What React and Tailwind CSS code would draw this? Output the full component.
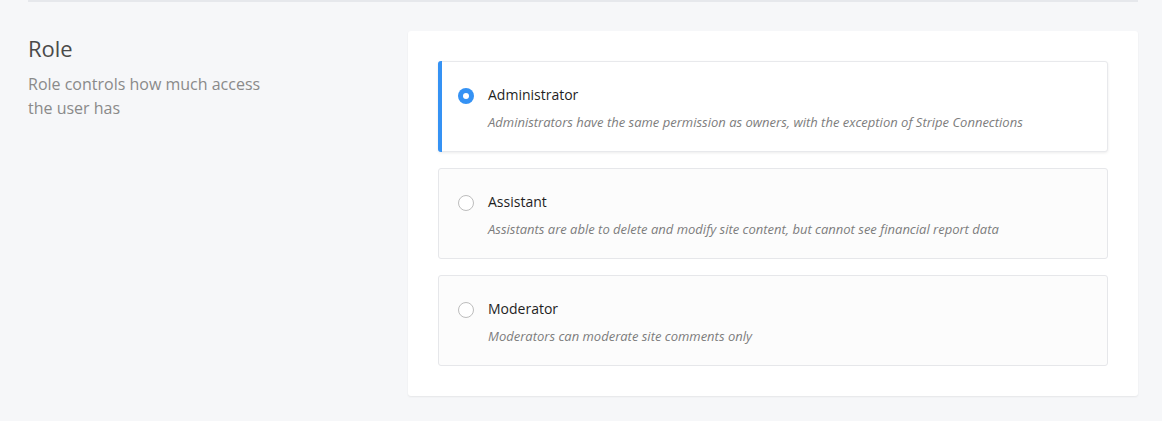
const roles = [
  {
    name: "Administrator",
    desc: "Administrators have the same permission as owners, with the exception of Stripe Connections",
    checked: true,
  },
  {
    name: "Assistant",
    desc: "Assistants are able to delete and modify site content, but cannot see financial report data",
  },
  {
    name: "Moderator",
    desc: "Moderators can moderate site comments only",
  },
];

function Radio({ checked }) {
  if (checked) {
    return (
      <span className="flex h-4 w-4 items-center justify-center rounded-full bg-[#3592f4]">
        <span className="block h-[6px] w-[6px] rounded-full bg-white" />
      </span>
    );
  }
  return <span className="block h-4 w-4 rounded-full border border-[#bdbdbd] bg-white" />;
}

function RoleOption({ role }) {
  return (
    <label
      className={
        role.checked
          ? "relative flex h-[91px] gap-[14px] rounded-[3px] border border-[#e8e9ec] bg-white pl-[19px] pt-[24px] shadow-[0_1px_3px_rgba(0,0,0,0.08)]"
          : "flex h-[91px] gap-[14px] rounded-[3px] border border-[#e6e7ea] bg-[#fcfcfc] pl-[19px] pt-[24px]"
      }
    >
      {role.checked && (
        <span className="absolute -left-px -top-px -bottom-px w-[4px] rounded-l-[3px] bg-[#3592f4]" />
      )}
      <div className="pt-[2px]">
        <Radio checked={role.checked} />
      </div>
      <div>
        <div className="text-[14px] leading-[18px] text-[#1f1f1f]">{role.name}</div>
        <div className="mt-[9px] text-[13px] italic leading-[18px] text-[#7d7d7d]">{role.desc}</div>
      </div>
    </label>
  );
}

export default function App() {
  return (
    <div
      className="min-h-[421px] bg-[#f6f7f9] pl-[28px] pr-[24px]"
      style={{ fontFamily: '"Open Sans", "Noto Sans", sans-serif' }}
    >
      <div className="h-[2px] bg-[#e6e8ec]" />
      <div className="flex pt-[29px]">
        <div className="w-[380px] pt-[3px]">
          <h2 className="text-[22px] leading-[28px] text-[#4a4a4a]">Role</h2>
          <p className="mt-[10px] w-[250px] text-[16px] leading-[24px] text-[#8a8a8a]">
            Role controls how much access the user has
          </p>
        </div>
        <div className="flex flex-1 flex-col gap-4 rounded-[3px] bg-white p-[30px] shadow-[0_1px_2px_rgba(0,0,0,0.07)]">
          {roles.map((r) => (
            <RoleOption key={r.name} role={r} />
          ))}
        </div>
      </div>
    </div>
  );
}
